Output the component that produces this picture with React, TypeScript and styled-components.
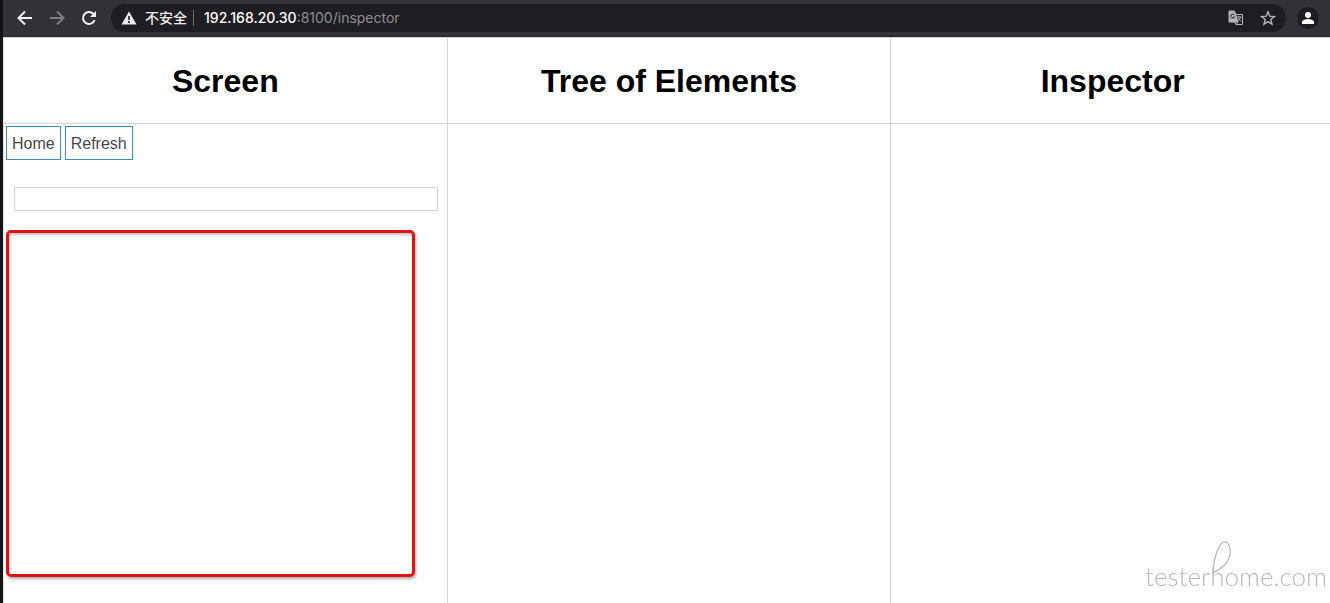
import React from "react";
import styled, { createGlobalStyle } from "styled-components";

const GlobalStyle = createGlobalStyle`
  *, *::before, *::after { box-sizing: border-box; }
  body {
    margin: 0;
    background: #fff;
    color: #000;
    font-family: "Liberation Sans", Arial, sans-serif;
  }
`;

const BrowserWindow = styled.div`
  display: flex;
  flex-direction: column;
  min-height: 100vh;
  overflow: hidden;
  border-left: 3px solid #141416;
`;

const BrowserBar = styled.header`
  display: flex;
  align-items: center;
  gap: 8px;
  height: 37px;
  padding: 0 11px 0 10px;
  background: #323136;
  border-bottom: 1px solid #26262a;
`;

const BarButton = styled.button<{ $dim?: boolean }>`
  display: flex;
  flex: none;
  align-items: center;
  justify-content: center;
  width: 24px;
  height: 24px;
  padding: 0;
  border: 0;
  background: transparent;
  color: ${(p) => (p.$dim ? "#808084" : "#f1f1f3")};
`;

const AddressBar = styled.div`
  display: flex;
  flex: 1;
  align-items: center;
  height: 28px;
  margin-left: 2px;
  padding: 0 6px 0 10px;
  border-radius: 14px;
  background: #1e1e22;
  color: #ebebed;
`;

const SecurityNote = styled.span`
  margin-left: 8px;
  padding-right: 6px;
  border-right: 1px solid #707074;
  font: 500 14px/16px Inter, "Noto Sans CJK SC", sans-serif;
`;

const Address = styled.span`
  flex: 1;
  margin-left: 10px;
  color: #8e8e92;
  font: 400 14px/20px Inter, sans-serif;
`;

const Host = styled.span`
  color: #fff;
  font-weight: 500;
`;

const AddressAction = styled(BarButton)`
  margin-left: 8px;
  color: #b4b4b8;
`;

const ProfileButton = styled(BarButton)`
  width: 22px;
  height: 22px;
  margin-left: 3px;
  border-radius: 50%;
  background: #1e1e22;
  color: #fff;
`;

const Panels = styled.main`
  display: grid;
  flex: 1;
  grid-template-columns: repeat(3, 1fr);
  margin-right: -5px;
  border-top: 1px solid #d0d3d3;
  border-left: 1px solid #e4e4e4;
`;

const Panel = styled.section`
  display: flex;
  flex-direction: column;
  min-width: 0;
  border-right: 1px solid #d1d5d5;
`;

const PanelTitle = styled.h1`
  margin: 0;
  padding: 25px 0 24px;
  border-bottom: 1px solid #d1d5d5;
  font-size: 32px;
  font-weight: 700;
  line-height: 36px;
  text-align: center;
`;

const PanelBody = styled.div`
  padding: 2px;
`;

const ButtonRow = styled.div`
  display: flex;
  gap: 4px;
`;

const ActionButton = styled.button`
  height: 34px;
  padding: 2px 5px 0;
  border: 1px solid #3c8dbc;
  background: #fff;
  color: #484848;
  font: 16px/20px "Liberation Sans", Arial, sans-serif;
`;

const ScreenInput = styled.input`
  display: block;
  width: calc(100% - 15px);
  height: 24px;
  margin: 27px 8px 19px;
  padding: 0 4px;
  border: 1px solid #d1d5d8;
  background: #fff;
  font: 14px/20px "Liberation Sans", Arial, sans-serif;
`;

const Highlight = styled.div`
  width: calc(100% - 30px);
  height: 347px;
  border: 3px solid #e01414;
  border-radius: 5px;
  box-shadow: 1px 2px 3px rgba(0, 0, 0, 0.35), inset 1px 2px 3px rgba(0, 0, 0, 0.25);
`;

const Watermark = styled.div`
  position: fixed;
  right: 3px;
  bottom: 10px;
  color: #b8b8b8;
  font: 300 26px/34px Lato, sans-serif;
`;

const Flourish = styled.svg`
  position: absolute;
  left: 64px;
  top: -19px;
`;

const App = () => (
  <BrowserWindow>
    <GlobalStyle />
    <BrowserBar>
      <BarButton aria-label="Back">
        <svg width="16" height="16" viewBox="0 0 16 16" fill="none" stroke="currentColor" strokeWidth="2">
          <path d="M15 8H2M8 1.5 1.5 8 8 14.5" />
        </svg>
      </BarButton>
      <BarButton aria-label="Forward" $dim>
        <svg width="16" height="16" viewBox="0 0 16 16" fill="none" stroke="currentColor" strokeWidth="2">
          <path d="M1 8h13M8 1.5 14.5 8 8 14.5" />
        </svg>
      </BarButton>
      <BarButton aria-label="Reload">
        <svg width="16" height="16" viewBox="0 0 16 16" fill="none" stroke="currentColor" strokeWidth="2">
          <path d="M13.6 10.2A6 6 0 1 1 12.3 3.8L14 5.5" />
          <path d="M15 1v6H9z" fill="currentColor" stroke="none" />
        </svg>
      </BarButton>
      <AddressBar>
        <svg width="16" height="16" viewBox="0 0 16 16" aria-hidden="true">
          <path d="M8 1.5 15.5 14.5H.5z" fill="currentColor" />
          <path d="M8 6v4M8 11v2" stroke="#1e1e22" strokeWidth="1.6" />
        </svg>
        <SecurityNote>不安全</SecurityNote>
        <Address>
          <Host>192.168.20.30</Host>:8100/inspector
        </Address>
        <AddressAction aria-label="Translate this page">
          <svg width="16" height="16" viewBox="0 0 16 16" fill="none" stroke="currentColor">
            <path d="M7 4.5h7.5v10H8L6.5 12" />
            <path d="M1 1h5.5l3.5 11H1z" fill="currentColor" />
            <path d="M6.3 5A2 2 0 1 0 6.5 7H5" stroke="#1e1e22" />
            <path d="M9 7h4.5M11 6v1M12.5 7c-.3 2-1.5 3.2-3 4M10 8l3 3.5M8 14.5l2-2.5" />
          </svg>
        </AddressAction>
        <AddressAction aria-label="Bookmark this page">
          <svg width="16" height="16" viewBox="0 0 16 16" fill="none" stroke="currentColor" strokeWidth="1.4">
            <path d="m8 1.8 1.7 4.4 4.8.3-3.7 3 1.2 4.7L8 11.6l-4 2.6 1.2-4.7-3.7-3 4.8-.3z" />
          </svg>
        </AddressAction>
      </AddressBar>
      <ProfileButton aria-label="Profile">
        <svg width="14" height="14" viewBox="0 0 14 14" fill="currentColor">
          <circle cx="7" cy="4" r="3" />
          <path d="M1 13v-2c0-2 4-3 6-3s6 1 6 3v2z" />
        </svg>
      </ProfileButton>
    </BrowserBar>
    <Panels>
      <Panel>
        <PanelTitle>Screen</PanelTitle>
        <PanelBody>
          <ButtonRow>
            <ActionButton>Home</ActionButton>
            <ActionButton>Refresh</ActionButton>
          </ButtonRow>
          <ScreenInput type="text" aria-label="Text to send" />
          <Highlight />
        </PanelBody>
      </Panel>
      <Panel>
        <PanelTitle>Tree of Elements</PanelTitle>
      </Panel>
      <Panel>
        <PanelTitle>Inspector</PanelTitle>
      </Panel>
    </Panels>
    <Watermark>
      testerhome.com
      <Flourish width="24" height="46" viewBox="0 0 24 46" fill="none" stroke="currentColor" strokeWidth="1.3" aria-hidden="true">
        <path d="M4 34C4 24 7 9 13 3c5-4 9 3 8 11C20 23 13 28 4 33" />
      </Flourish>
    </Watermark>
  </BrowserWindow>
);

export default App;
